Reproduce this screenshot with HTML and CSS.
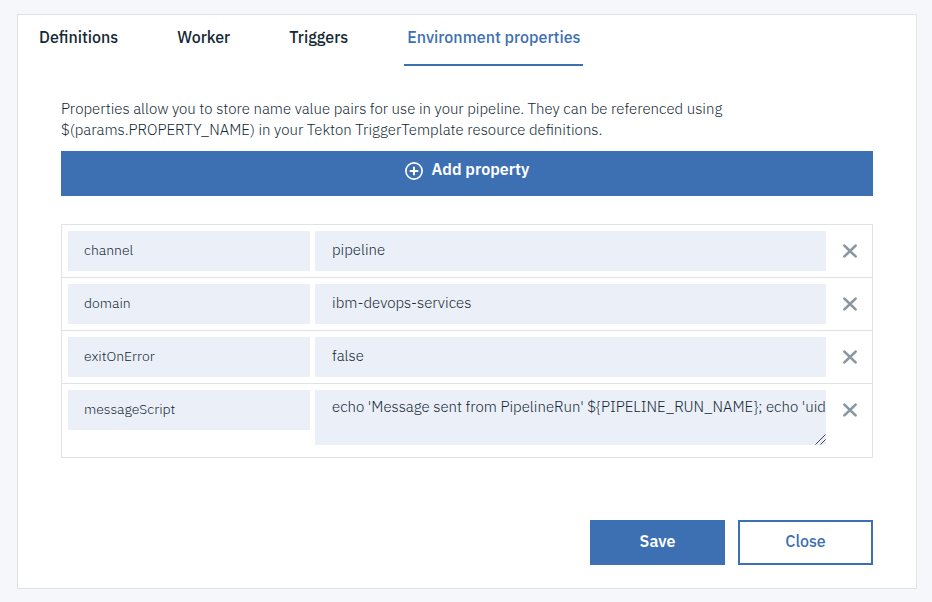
FILE: index.html
```html
<!DOCTYPE html>
<html lang="en">
<head>
<meta charset="utf-8">
<meta name="viewport" content="width=device-width, initial-scale=1">
<title>Environment properties</title>
<link rel="stylesheet" href="styles.css">
</head>
<body>
<svg class="sprite" aria-hidden="true">
  <symbol id="icon-remove" viewBox="0 0 16 16"><path d="M2.4 2.6 13.6 13.4M13.6 2.6 2.4 13.4" fill="none" stroke="currentColor" stroke-width="2.7" stroke-linecap="round"/></symbol>
</svg>
<main class="card">
  <nav class="tabs">
    <a class="tab" href="#definitions">Definitions</a>
    <a class="tab" href="#worker">Worker</a>
    <a class="tab" href="#triggers">Triggers</a>
    <a class="tab tab-active" href="#environment" aria-current="page">Environment properties</a>
  </nav>
  <form class="panel">
    <p class="intro">Properties allow you to store name value pairs for use in your pipeline. They can be referenced using $(params.PROPERTY_NAME) in your Tekton TriggerTemplate resource definitions.</p>
    <button class="button button-add" type="button">
      <svg class="icon-add" viewBox="0 0 18 18" aria-hidden="true"><circle cx="9" cy="9" r="8.1" fill="none" stroke="currentColor" stroke-width="1.7"/><path d="M9 4.7v8.6M4.7 9h8.6" fill="none" stroke="currentColor" stroke-width="2"/></svg>
      <span>Add property</span>
    </button>
    <ul class="properties">
      <li class="property">
        <input class="field name" aria-label="Property name" value="channel">
        <input class="field" aria-label="Value of channel" value="pipeline">
        <button class="remove" type="button" aria-label="Remove channel"><svg class="icon-remove"><use href="#icon-remove"/></svg></button>
      </li>
      <li class="property">
        <input class="field name" aria-label="Property name" value="domain">
        <input class="field" aria-label="Value of domain" value="ibm-devops-services">
        <button class="remove" type="button" aria-label="Remove domain"><svg class="icon-remove"><use href="#icon-remove"/></svg></button>
      </li>
      <li class="property">
        <input class="field name" aria-label="Property name" value="exitOnError">
        <input class="field" aria-label="Value of exitOnError" value="false">
        <button class="remove" type="button" aria-label="Remove exitOnError"><svg class="icon-remove"><use href="#icon-remove"/></svg></button>
      </li>
      <li class="property property-script">
        <input class="field name" aria-label="Property name" value="messageScript">
        <textarea class="field script" aria-label="Value of messageScript" wrap="off" spellcheck="false">echo 'Message sent from PipelineRun' ${PIPELINE_RUN_NAME}; echo 'uid:'</textarea>
        <button class="remove" type="button" aria-label="Remove messageScript"><svg class="icon-remove"><use href="#icon-remove"/></svg></button>
      </li>
    </ul>
    <div class="actions">
      <button class="button" type="button">Save</button>
      <button class="button button-outline" type="button">Close</button>
    </div>
  </form>
</main>
</body>
</html>
```
FILE: styles.css
```css
* { box-sizing: border-box; }

body {
  margin: 0;
  padding: 14px 15px 13px 17px;
  background: #f5f7fb;
  color: #152935;
  font: 300 15px/21px "IBM Plex Sans", Roboto, sans-serif;
}

button, input, textarea { font: inherit; color: inherit; margin: 0; }
.sprite { display: none; }

.card {
  background: #fff;
  border: 1px solid #dfe3e6;
}

.tabs {
  display: flex;
  gap: 53px;
  padding: 0 18px;
}

.tab {
  padding: 12px 3px 16px;
  border-bottom: 2px solid transparent;
  color: inherit;
  font-size: 16px;
  font-weight: 500;
  text-decoration: none;
}

.tab-active {
  color: #3d70b2;
  border-color: #3d70b2;
}

.panel { padding: 32px 43px 23px; }
.intro { margin: 0 0 11px; max-width: 680px; }

.button {
  display: flex;
  align-items: center;
  justify-content: center;
  width: 135px;
  height: 45px;
  padding: 0 0 2px;
  border: 2px solid #3d70b2;
  border-radius: 0;
  background: #3d70b2;
  color: #fff;
  font-size: 16px;
  font-weight: 600;
}

.button-add {
  width: 100%;
  gap: 9px;
  padding-bottom: 8px;
}

.icon-add { width: 18px; height: 18px; margin-top: 3px; }

.button-outline {
  background: #fff;
  color: #3d70b2;
  font-weight: 500;
}

.properties {
  margin: 28px 0 62px;
  padding: 0;
  list-style: none;
  border: 1px solid #dfe3e6;
}

.property {
  display: grid;
  grid-template-columns: minmax(0, 242fr) 5px minmax(0, 511fr) 46px;
  align-items: start;
  padding: 6px 0 6px 6px;
}

.property + .property { border-top: 1px solid #dfe3e6; }
.property-script { padding-bottom: 12px; }

.field {
  display: block;
  grid-column: 3;
  width: 100%;
  height: 40px;
  padding: 0 17px 3px;
  border: 0;
  border-radius: 0;
  background: #ebf0f8;
}

.name {
  grid-column: 1;
  padding: 0 16px 2px;
  font-size: 14px;
}

.script {
  height: 55px;
  padding: 6px 0 6px 17px;
  overflow: hidden;
  resize: vertical;
}

.script::-webkit-resizer {
  background: url("data:image/svg+xml,%3Csvg xmlns='http://www.w3.org/2000/svg' width='11' height='11'%3E%3Cpath d='M.5 10.5l10-10M5.5 10.5l5-5' stroke='%23444' fill='none'/%3E%3C/svg%3E") no-repeat right bottom;
}

.remove {
  display: grid;
  place-items: center;
  width: 100%;
  height: 40px;
  padding: 0 0 0 1px;
  border: 0;
  background: none;
  color: #8897a2;
}

.icon-remove { width: 16px; height: 16px; }

.actions {
  display: flex;
  justify-content: flex-end;
  gap: 13px;
}
```
